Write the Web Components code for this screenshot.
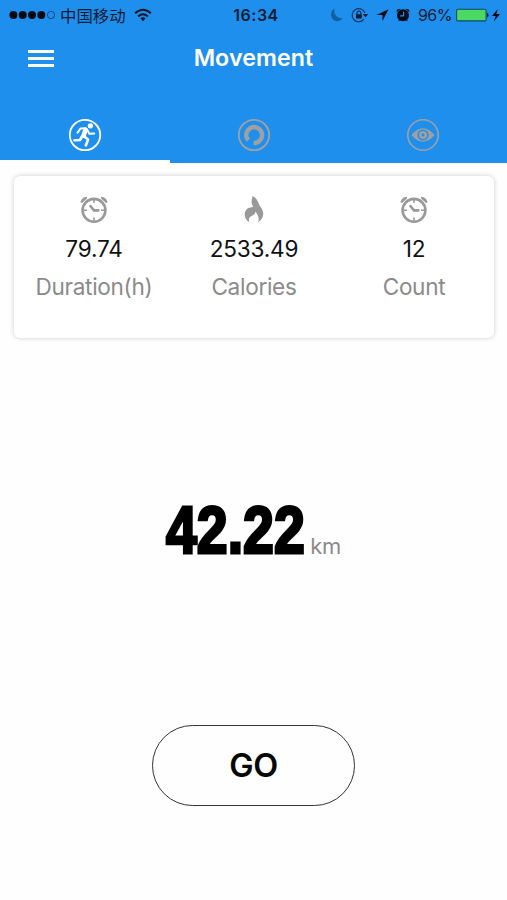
<!DOCTYPE html>
<html lang="en">
<head>
<meta charset="utf-8">
<title>Movement</title>
<style>
  body {
    margin: 0;
    background: #fefefe;
    font-family: Inter, "Noto Sans CJK SC", sans-serif;
  }
</style>
</head>
<body>
<movement-application></movement-application>
<script>
const icons = {
  run: `<svg width="34" height="34" viewBox="0 0 34 34" fill="none" stroke="currentColor">
    <circle cx="17" cy="17" r="15.2" stroke-width="1.8"/>
    <circle cx="22.4" cy="7.8" r="2.6" fill="currentColor" stroke="none"/>
    <path d="M17.6 11.6L15.6 17.6" stroke-width="4.6" stroke-linecap="round"/>
    <path d="M17.3 10.3L12.6 10.4L9.6 14.6M19.2 11.8L21.4 15.8L26.3 15.4" stroke-width="2" stroke-linecap="round" stroke-linejoin="round"/>
    <path d="M15.8 18.2L20.1 21.6L17.8 27.4M14.2 18L12 22L6.4 22.3" stroke-width="2.6" stroke-linecap="round" stroke-linejoin="round"/>
  </svg>`,
  ring: `<svg width="34" height="34" viewBox="0 0 34 34" fill="none" stroke="currentColor">
    <circle cx="17" cy="17" r="15.2" stroke-width="1.8"/>
    <path d="M11.3 22.3A7.9 7.9 0 1 1 16.6 24.9" stroke-width="4.4"/>
  </svg>`,
  eye: `<svg width="34" height="34" viewBox="0 0 34 34" fill="none" stroke="currentColor">
    <circle cx="17" cy="17" r="15.2" stroke-width="1.6"/>
    <path d="M5.4 17Q17 3.4 28.6 17Q17 30.6 5.4 17Z" fill="currentColor" stroke="none"/>
    <circle cx="17" cy="17" r="4.8" stroke="#1f8fee" stroke-width="1.6"/>
    <circle cx="17" cy="17" r="1.4" fill="#1f8fee" stroke="none"/>
  </svg>`,
  clock: `<svg width="28" height="28" viewBox="0 0 28 28" fill="none" stroke="currentColor">
    <circle cx="14" cy="15.3" r="11.4" stroke-width="2.6"/>
    <path d="M14 4.8V8M14 22.6V25.8M3.5 15.3H7M21 15.3H24.5" stroke-width="1.6"/>
    <path d="M9.8 10.2L14 15.4H19.4" stroke-width="2.6"/>
    <path d="M.4 7.4Q1.3 2.3 6.7 1.7L7.2 3.2L2 8ZM27.6 7.4Q26.7 2.3 21.3 1.7L20.8 3.2L26 8Z" fill="currentColor" stroke="none"/>
  </svg>`,
  flame: `<svg width="28" height="28" viewBox="0 0 28 28" fill="currentColor">
    <path d="M12.6 1C18.5 4 17.8 8.5 20.4 11.7C25.4 18 23.3 23.8 18.2 27.2C19.6 22 17.8 20.4 15.5 16.6C15.2 19.2 13.9 20.2 12 20.7C8.8 22 8.4 24.2 9.4 27.2C4.4 24.2 3.2 18.3 6.5 14.5C8.7 11.8 11 13.4 13.3 11.3C10.8 8 11.5 5 12.6 1Z"/>
  </svg>`
}

const statusTemplate = document.createElement('template')
statusTemplate.innerHTML = `
<style>
  :host {
    display: flex;
    align-items: center;
    height: 30px;
    color: #071c30;
    font-size: 16px;
    line-height: 30px;
  }
  .side {
    flex: 1;
    display: flex;
    align-items: center;
    height: 30px;
  }
  .left {
    padding-left: 9px;
  }
  .carrier {
    margin: 0 8px 0 4px;
    font-family: "Noto Sans CJK SC", sans-serif;
    font-size: 16.4px;
  }
  .time {
    padding-left: 2px;
    font-weight: 600;
    font-size: 16px;
    letter-spacing: .5px;
  }
  .right {
    justify-content: flex-end;
    padding-right: 6px;
  }
  .percent {
    margin: 0 3px 0 2px;
    letter-spacing: -.5px;
  }
  svg {
    display: block;
    flex: none;
  }
</style>
<div class="side left">
  <svg width="47" height="10" viewBox="0 0 47 10">
    <g fill="#020a14"><circle cx="4.4" cy="5" r="4"/><circle cx="13.7" cy="5" r="4"/><circle cx="23" cy="5" r="4"/><circle cx="32.3" cy="5" r="4"/></g>
    <circle cx="42" cy="5" r="3.6" fill="none" stroke="#0b4271" stroke-width=".9"/>
  </svg>
  <span class="carrier">中国移动</span>
  <svg width="18" height="14" viewBox="0 0 18 14" fill="none" stroke="#061625" stroke-width="2">
    <path d="M1.2 5.2Q9 -1.7 16.8 5.2M4.1 8.4Q9 4.1 13.9 8.4"/>
    <path d="M6.3 10.3Q9 8.2 11.7 10.3L9 13.3Z" fill="#061625" stroke="none"/>
  </svg>
</div>
<span class="time">16:34</span>
<div class="side right">
  <svg width="86" height="18" viewBox="0 0 86 18">
    <path d="M4.6 2.6C.2 5 0 11 3.3 13.8C6.5 16.4 11.2 15.2 12.8 12C7.5 13.2 3.1 8.3 4.6 2.6Z" fill="#14609f"/>
    <g fill="none" stroke="#0a3357" stroke-width="1.2"><path d="M34 13.2A6.6 6.6 0 1 1 35 7"/><path d="M27 8.4V7A1.9 1.9 0 0 1 30.8 7V8.4"/></g>
    <path d="M26 8.2H31.8V12.4H26ZM32.9 8H38.2L35.5 11.2Z" fill="#061a2e"/>
    <path d="M58.5 3.2L46.5 9.1H52.5V15Z" fill="#020a14"/>
    <g fill="#020a14"><circle cx="73" cy="9.2" r="6"/><path d="M66.6 6.2Q66.2 2.7 70.8 2.8ZM79.4 6.2Q79.8 2.7 75.2 2.8ZM67.8 15.3L69.8 13L71 14ZM78.2 15.3L76.2 13L75 14Z"/></g>
    <path d="M73.6 5.8V9.8H70.2" fill="none" stroke="#1f8fee" stroke-width="1.2"/>
  </svg>
  <span class="percent">96%</span>
  <svg width="46" height="16" viewBox="0 0 46 16">
    <rect x="1.6" y="2.3" width="29.5" height="11.6" rx="1.3" fill="#4bd964" stroke="#0d4a65" stroke-width="1.1"/>
    <path d="M32 5.7Q35.2 8.2 32 10.8Z" fill="#061a2e"/>
    <path d="M42.8 2L37 9.1H40.6L38.8 14.5L45 7H41.3Z" fill="#020a14"/>
  </svg>
</div>
`

customElements.define('status-bar',
  /**
   * Represents the status bar of the phone.
   */
  class extends HTMLElement {
    /**
     * Creates an instance of the current type.
     */
    constructor () {
      super()

      this.attachShadow({ mode: 'open' })
        .appendChild(statusTemplate.content.cloneNode(true))
    }
  }
)

const navTemplate = document.createElement('template')
navTemplate.innerHTML = `
<style>
  :host {
    display: grid;
    grid-template-columns: 68px 1fr 68px;
    align-items: center;
    height: 56px;
    color: #fff;
  }
  button {
    display: flex;
    flex-direction: column;
    gap: 4px;
    width: 26px;
    margin: 0 0 0 28px;
    padding: 0;
    border: 0;
    background: none;
  }
  i {
    height: 3px;
    width: 26px;
    background: #fff;
  }
  h1 {
    margin: 0;
    text-align: center;
    font-size: 23.2px;
    line-height: 30px;
    font-weight: 600;
    letter-spacing: .1px;
  }
</style>
<button aria-label="Menu"><i></i><i></i><i></i></button>
<h1><slot></slot></h1>
`

customElements.define('nav-bar',
  /**
   * Represents the navigation bar with its menu button.
   */
  class extends HTMLElement {
    /**
     * Creates an instance of the current type.
     */
    constructor () {
      super()

      this.attachShadow({ mode: 'open' })
        .appendChild(navTemplate.content.cloneNode(true))
    }
  }
)

const tabTemplate = document.createElement('template')
tabTemplate.innerHTML = `
<style>
  :host {
    display: flex;
    flex: 1;
    justify-content: center;
    box-sizing: border-box;
    height: 77px;
    padding-top: 32px;
    color: #a0a0a0;
  }
  :host([active]) {
    flex: 0 0 170px;
    color: #fff;
    border-bottom: 3px solid #fff;
  }
  svg {
    display: block;
  }
</style>
`

customElements.define('icon-tab',
  /**
   * Represents one tab.
   */
  class extends HTMLElement {
    /**
     * Creates an instance of the current type.
     */
    constructor () {
      super()

      this.attachShadow({ mode: 'open' })
        .appendChild(tabTemplate.content.cloneNode(true))
    }

    /**
     * Adds the icon when the element is connected.
     */
    connectedCallback () {
      this.shadowRoot.innerHTML += icons[this.getAttribute('icon')]
    }
  }
)

const statTemplate = document.createElement('template')
statTemplate.innerHTML = `
<style>
  :host {
    display: flex;
    flex: 1;
    flex-direction: column;
    align-items: center;
    padding-top: 19px;
  }
  .icon {
    height: 28px;
    color: #999;
  }
  .value {
    margin-top: 11px;
    font-size: 22.6px;
    line-height: 30px;
    letter-spacing: -.2px;
    color: #111;
  }
  .label {
    margin-top: 8px;
    font-size: 22.6px;
    line-height: 30px;
    letter-spacing: -.3px;
    color: #8b8b8b;
  }
</style>
<div class="icon"></div>
<div class="value"><slot></slot></div>
<div class="label"></div>
`

customElements.define('stat-item',
  /**
   * Represents a value with its icon and label.
   */
  class extends HTMLElement {
    /**
     * Creates an instance of the current type.
     */
    constructor () {
      super()

      this.attachShadow({ mode: 'open' })
        .appendChild(statTemplate.content.cloneNode(true))
    }

    /**
     * Sets the icon and the label when the element is connected.
     */
    connectedCallback () {
      this.shadowRoot.querySelector('.icon').innerHTML = icons[this.getAttribute('icon')]
      this.shadowRoot.querySelector('.label').textContent = this.getAttribute('label')
    }
  }
)

const distanceTemplate = document.createElement('template')
distanceTemplate.innerHTML = `
<style>
  :host {
    display: flex;
    justify-content: center;
    align-items: baseline;
    color: #000;
  }
  .box {
    width: 137px;
    font-family: "Liberation Sans", sans-serif;
    font-size: 66px;
    line-height: 80px;
    font-weight: 700;
  }
  .number {
    display: inline-block;
    transform: translateY(-1.5px) scaleX(.84);
    transform-origin: 0 0;
    -webkit-text-stroke: 3px #000;
  }
  .unit {
    margin-left: 7px;
    font-size: 22px;
    letter-spacing: -.5px;
    color: #8b8b8b;
  }
</style>
<div class="box"><span class="number"><slot></slot></span></div>
<span class="unit">km</span>
`

customElements.define('distance-display',
  /**
   * Represents the total distance.
   */
  class extends HTMLElement {
    /**
     * Creates an instance of the current type.
     */
    constructor () {
      super()

      this.attachShadow({ mode: 'open' })
        .appendChild(distanceTemplate.content.cloneNode(true))
    }
  }
)

const buttonTemplate = document.createElement('template')
buttonTemplate.innerHTML = `
<style>
  :host {
    display: block;
  }
  button {
    display: block;
    box-sizing: border-box;
    width: 203px;
    height: 81px;
    padding: 0;
    border: 1.4px solid #333;
    border-radius: 41px;
    background: #fefefe;
    color: #080808;
    font: 600 32.5px Inter, sans-serif;
    letter-spacing: -.3px;
  }
</style>
<button><slot></slot></button>
`

customElements.define('go-button',
  /**
   * Represents the start button.
   */
  class extends HTMLElement {
    /**
     * Creates an instance of the current type.
     */
    constructor () {
      super()

      this.attachShadow({ mode: 'open' })
        .appendChild(buttonTemplate.content.cloneNode(true))
    }
  }
)

const template = document.createElement('template')
template.innerHTML = `
<style>
  :host {
    display: flex;
    flex-direction: column;
    height: 900px;
    overflow: hidden;
  }
  header {
    background: #1f8fee;
  }
  .tabs {
    display: flex;
  }
  .card {
    display: flex;
    flex: none;
    box-sizing: border-box;
    width: 480px;
    height: 162px;
    margin: 13px 0 0 14px;
    border-radius: 6px;
    background: #fff;
    box-shadow: 0 0 5px rgba(0, 0, 0, .2);
  }
  distance-display {
    margin-top: 153px;
  }
  go-button {
    margin: 154px auto 0;
  }
</style>
<header>
  <status-bar></status-bar>
  <nav-bar>Movement</nav-bar>
  <div class="tabs">
    <icon-tab icon="run" active></icon-tab>
    <icon-tab icon="ring"></icon-tab>
    <icon-tab icon="eye"></icon-tab>
  </div>
</header>
<section class="card">
  <stat-item icon="clock" label="Duration(h)">79.74</stat-item>
  <stat-item icon="flame" label="Calories">2533.49</stat-item>
  <stat-item icon="clock" label="Count">12</stat-item>
</section>
<distance-display>42.22</distance-display>
<go-button>GO</go-button>
`

customElements.define('movement-application',
  /**
   * Represents a movement-application element.
   */
  class extends HTMLElement {
    /**
     * Creates an instance of the current type.
     */
    constructor () {
      super()

      this.attachShadow({ mode: 'open' })
        .appendChild(template.content.cloneNode(true))
    }
  }
)
</script>
</body>
</html>
